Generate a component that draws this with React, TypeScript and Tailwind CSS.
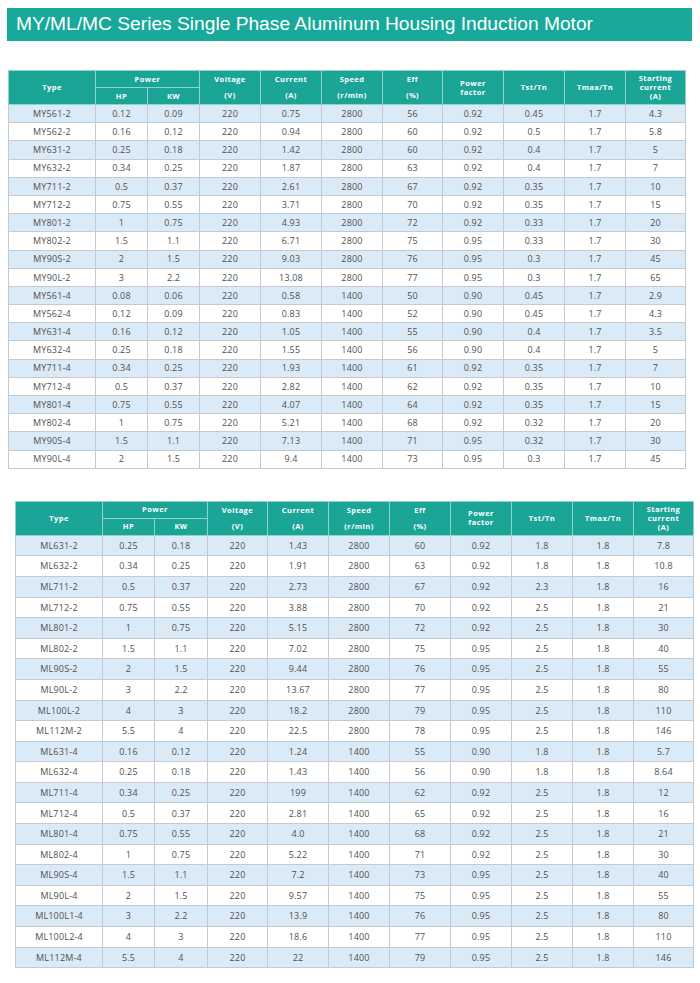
const t1: string[][] = [
  ['MY561-2', '0.12', '0.09', '220', '0.75', '2800', '56', '0.92', '0.45', '1.7', '4.3'],
  ['MY562-2', '0.16', '0.12', '220', '0.94', '2800', '60', '0.92', '0.5', '1.7', '5.8'],
  ['MY631-2', '0.25', '0.18', '220', '1.42', '2800', '60', '0.92', '0.4', '1.7', '5'],
  ['MY632-2', '0.34', '0.25', '220', '1.87', '2800', '63', '0.92', '0.4', '1.7', '7'],
  ['MY711-2', '0.5', '0.37', '220', '2.61', '2800', '67', '0.92', '0.35', '1.7', '10'],
  ['MY712-2', '0.75', '0.55', '220', '3.71', '2800', '70', '0.92', '0.35', '1.7', '15'],
  ['MY801-2', '1', '0.75', '220', '4.93', '2800', '72', '0.92', '0.33', '1.7', '20'],
  ['MY802-2', '1.5', '1.1', '220', '6.71', '2800', '75', '0.95', '0.33', '1.7', '30'],
  ['MY90S-2', '2', '1.5', '220', '9.03', '2800', '76', '0.95', '0.3', '1.7', '45'],
  ['MY90L-2', '3', '2.2', '220', '13.08', '2800', '77', '0.95', '0.3', '1.7', '65'],
  ['MY561-4', '0.08', '0.06', '220', '0.58', '1400', '50', '0.90', '0.45', '1.7', '2.9'],
  ['MY562-4', '0.12', '0.09', '220', '0.83', '1400', '52', '0.90', '0.45', '1.7', '4.3'],
  ['MY631-4', '0.16', '0.12', '220', '1.05', '1400', '55', '0.90', '0.4', '1.7', '3.5'],
  ['MY632-4', '0.25', '0.18', '220', '1.55', '1400', '56', '0.90', '0.4', '1.7', '5'],
  ['MY711-4', '0.34', '0.25', '220', '1.93', '1400', '61', '0.92', '0.35', '1.7', '7'],
  ['MY712-4', '0.5', '0.37', '220', '2.82', '1400', '62', '0.92', '0.35', '1.7', '10'],
  ['MY801-4', '0.75', '0.55', '220', '4.07', '1400', '64', '0.92', '0.35', '1.7', '15'],
  ['MY802-4', '1', '0.75', '220', '5.21', '1400', '68', '0.92', '0.32', '1.7', '20'],
  ['MY90S-4', '1.5', '1.1', '220', '7.13', '1400', '71', '0.95', '0.32', '1.7', '30'],
  ['MY90L-4', '2', '1.5', '220', '9.4', '1400', '73', '0.95', '0.3', '1.7', '45'],
];

const t2: string[][] = [
  ['ML631-2', '0.25', '0.18', '220', '1.43', '2800', '60', '0.92', '1.8', '1.8', '7.8'],
  ['ML632-2', '0.34', '0.25', '220', '1.91', '2800', '63', '0.92', '1.8', '1.8', '10.8'],
  ['ML711-2', '0.5', '0.37', '220', '2.73', '2800', '67', '0.92', '2.3', '1.8', '16'],
  ['ML712-2', '0.75', '0.55', '220', '3.88', '2800', '70', '0.92', '2.5', '1.8', '21'],
  ['ML801-2', '1', '0.75', '220', '5.15', '2800', '72', '0.92', '2.5', '1.8', '30'],
  ['ML802-2', '1.5', '1.1', '220', '7.02', '2800', '75', '0.95', '2.5', '1.8', '40'],
  ['ML90S-2', '2', '1.5', '220', '9.44', '2800', '76', '0.95', '2.5', '1.8', '55'],
  ['ML90L-2', '3', '2.2', '220', '13.67', '2800', '77', '0.95', '2.5', '1.8', '80'],
  ['ML100L-2', '4', '3', '220', '18.2', '2800', '79', '0.95', '2.5', '1.8', '110'],
  ['ML112M-2', '5.5', '4', '220', '22.5', '2800', '78', '0.95', '2.5', '1.8', '146'],
  ['ML631-4', '0.16', '0.12', '220', '1.24', '1400', '55', '0.90', '1.8', '1.8', '5.7'],
  ['ML632-4', '0.25', '0.18', '220', '1.43', '1400', '56', '0.90', '1.8', '1.8', '8.64'],
  ['ML711-4', '0.34', '0.25', '220', '199', '1400', '62', '0.92', '2.5', '1.8', '12'],
  ['ML712-4', '0.5', '0.37', '220', '2.81', '1400', '65', '0.92', '2.5', '1.8', '16'],
  ['ML801-4', '0.75', '0.55', '220', '4.0', '1400', '68', '0.92', '2.5', '1.8', '21'],
  ['ML802-4', '1', '0.75', '220', '5.22', '1400', '71', '0.92', '2.5', '1.8', '30'],
  ['ML90S-4', '1.5', '1.1', '220', '7.2', '1400', '73', '0.95', '2.5', '1.8', '40'],
  ['ML90L-4', '2', '1.5', '220', '9.57', '1400', '75', '0.95', '2.5', '1.8', '55'],
  ['ML100L1-4', '3', '2.2', '220', '13.9', '1400', '76', '0.95', '2.5', '1.8', '80'],
  ['ML100L2-4', '4', '3', '220', '18.6', '1400', '77', '0.95', '2.5', '1.8', '110'],
  ['ML112M-4', '5.5', '4', '220', '22', '1400', '79', '0.95', '2.5', '1.8', '146'],
];

const th = 'border border-[#8fd3ca] px-0 text-center align-middle font-bold text-white';

function SpecTable({ rows, widths, rowClass }: { rows: string[][]; widths: number[]; rowClass: string }) {
  return (
    <table className="table-fixed border-collapse font-['Open_Sans',sans-serif] text-[#505050]">
      <colgroup>
        {widths.map((w, i) => (
          <col key={i} style={{ width: w }} />
        ))}
      </colgroup>
      <thead className="bg-[#1ba597] text-[7.5px] leading-[9px] tracking-[0.06em]">
        <tr className="h-[17px]">
          <th rowSpan={2} className={th}>Type</th>
          <th colSpan={2} className={th}>Power</th>
          <th className={`${th} border-b-0`}>Voltage</th>
          <th className={`${th} border-b-0`}>Current</th>
          <th className={`${th} border-b-0`}>Speed</th>
          <th className={`${th} border-b-0`}>Eff</th>
          <th rowSpan={2} className={th}>Power<br />factor</th>
          <th rowSpan={2} className={th}>Tst/Tn</th>
          <th rowSpan={2} className={th}>Tmax/Tn</th>
          <th rowSpan={2} className={th}>Starting<br />current<br />(A)</th>
        </tr>
        <tr className="h-[17px]">
          <th className={th}>HP</th>
          <th className={th}>KW</th>
          <th className={`${th} border-t-0`}>(V)</th>
          <th className={`${th} border-t-0`}>(A)</th>
          <th className={`${th} border-t-0`}>(r/min)</th>
          <th className={`${th} border-t-0`}>(%)</th>
        </tr>
      </thead>
      <tbody className="text-[9px] tracking-[0.02em]">
        {rows.map((r, i) => (
          <tr key={r[0]} className={`${rowClass} ${i % 2 === 0 ? 'bg-[#dbeaf7]' : 'bg-white'}`}>
            {r.map((c, j) => (
              <td key={j} className="border border-[#c4cad1] p-0 text-center align-middle">
                {c}
              </td>
            ))}
          </tr>
        ))}
      </tbody>
    </table>
  );
}

export default function App() {
  return (
    <div className="h-[983px] w-[700px] bg-white pt-[8px]">
      <div className="ml-[7px] flex h-[33px] w-[685px] items-center bg-[#19a99a] pl-[9px]">
        <h1 className="font-['Liberation_Sans',Arial,sans-serif] text-[19.2px] font-normal tracking-[0em] text-white">
          MY/ML/MC Series Single Phase Aluminum Housing Induction Motor
        </h1>
      </div>
      <div className="ml-[8px] mt-[29px]">
        <SpecTable rows={t1} widths={[87, 52, 52, 61, 61, 61, 60, 61, 61, 61, 60]} rowClass="h-[18.2px]" />
      </div>
      <div className="ml-[15px] mt-[32px]">
        <SpecTable rows={t2} widths={[87, 52, 53, 60, 61, 61, 61, 61, 61, 61, 60]} rowClass="h-[20.6px]" />
      </div>
    </div>
  );
}
